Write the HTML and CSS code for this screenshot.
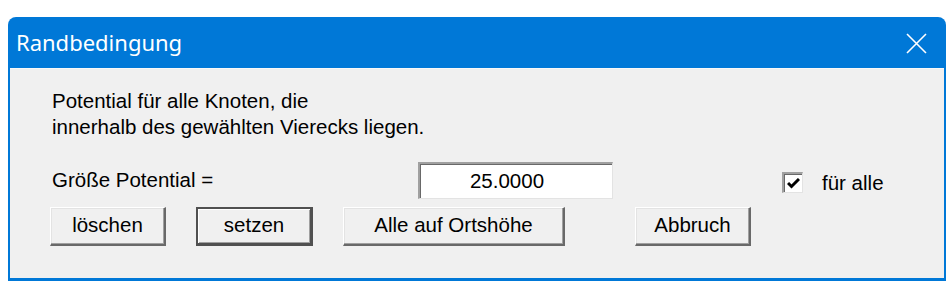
FILE: index.html
```html
<!DOCTYPE html>
<html lang="de">
<head>
    <meta charset="UTF-8">
    <title>Randbedingung</title>
    <link rel="stylesheet" href="styles.css">
</head>
<body>
    <div class="window">
        <div class="titlebar">
            <span class="title">Randbedingung</span>
            <span class="close">
                <svg width="21" height="21" viewBox="0 0 21 21">
                    <path d="M1 1 L20 20 M20 1 L1 20" stroke="#fff" stroke-width="1.6" fill="none"/>
                </svg>
            </span>
        </div>
        <div class="client">
            <p class="info">Potential für alle Knoten, die<br>innerhalb des gewählten Vierecks liegen.</p>
            <div class="value-row">
                <span class="value-label">Größe Potential =</span>
                <div class="edit">25.0000</div>
                <div class="check-group">
                    <span class="checkbox">
                        <svg width="13" height="11" viewBox="0 0 13 11">
                            <path d="M1 5 L4.5 8.5 L12 1" stroke="#000" stroke-width="3" fill="none"/>
                        </svg>
                    </span>
                    <span>für alle</span>
                </div>
            </div>
            <div class="button-row">
                <button class="btn btn-delete">löschen</button>
                <button class="btn btn-set default">setzen</button>
                <button class="btn btn-all">Alle auf Ortshöhe</button>
                <button class="btn btn-cancel">Abbruch</button>
            </div>
        </div>
    </div>
</body>
</html>
```

FILE: styles.css
```css
* {
    margin: 0;
    padding: 0;
    box-sizing: border-box;
}

body {
    background: #ffffff;
    font-family: 'Liberation Sans', Arial, sans-serif;
    color: #000;
}

.window {
    margin: 17px 0 0 8px;
    width: 938px;
    height: 264px;
    background: #0078d7;
    border-radius: 8px 8px 0 0;
    padding: 0 2px 3px 2px;
    display: flex;
    flex-direction: column;
}

.titlebar {
    height: 51px;
    display: flex;
    align-items: center;
    justify-content: space-between;
    padding: 0 17px 0 6px;
    color: #fff;
}

.title {
    font-family: 'Noto Sans', sans-serif;
    font-size: 22px;
    padding-bottom: 2px;
}

.close {
    display: flex;
    padding-top: 2px;
}

.client {
    flex: 1;
    background: #f0f0f0;
    border-top: 1px solid #f8f8f8;
    padding: 19px 0 0 40px;
    font-size: 20.5px;
}

.info {
    line-height: 26px;
    padding-left: 2px;
}

.value-row {
    display: flex;
    align-items: center;
    margin-top: 22px;
    height: 37px;
}

.value-label {
    width: 368px;
    padding-left: 2px;
    padding-bottom: 2px;
}

.edit {
    width: 195px;
    height: 37px;
    background: #fff;
    border-top: 2px solid #a0a0a0;
    border-left: 2px solid #a0a0a0;
    border-right: 1px solid #e3e3e3;
    border-bottom: 1px solid #e3e3e3;
    box-shadow: inset 1px 1px 0 #696969;
    display: flex;
    align-items: center;
    justify-content: center;
    padding-right: 18px;
}

.check-group {
    display: flex;
    align-items: center;
    margin-left: 169px;
    gap: 19px;
    margin-top: 4px;
}

.checkbox {
    width: 21px;
    height: 21px;
    background: #fff;
    border-top: 2px solid #a0a0a0;
    border-left: 2px solid #a0a0a0;
    border-right: 1px solid #e3e3e3;
    border-bottom: 1px solid #e3e3e3;
    box-shadow: inset 1px 1px 0 #696969;
    display: flex;
    align-items: center;
    justify-content: center;
}

.button-row {
    display: flex;
    margin-top: 8px;
    gap: 30px;
}

.btn {
    height: 39px;
    background: #f0f0f0;
    font-family: 'Liberation Sans', Arial, sans-serif;
    font-size: 20.5px;
    color: #000;
    border-top: 1px solid #fff;
    border-left: 1px solid #fff;
    border-right: 2px solid #696969;
    border-bottom: 2px solid #696969;
    box-shadow: inset -1px -1px 0 #a0a0a0, inset 1px 1px 0 #e3e3e3;
    padding-bottom: 2px;
}

.btn.default {
    border: 2px solid #505050;
    border-right-width: 3px;
    border-bottom-width: 3px;
    box-shadow: inset 1px 1px 0 #fff, inset -1px -1px 0 #a0a0a0;
}

.btn-delete { width: 116px; }
.btn-set { width: 117px; }
.btn-all { width: 222px; }
.btn-cancel { width: 116px; margin-left: 40px; }
```
